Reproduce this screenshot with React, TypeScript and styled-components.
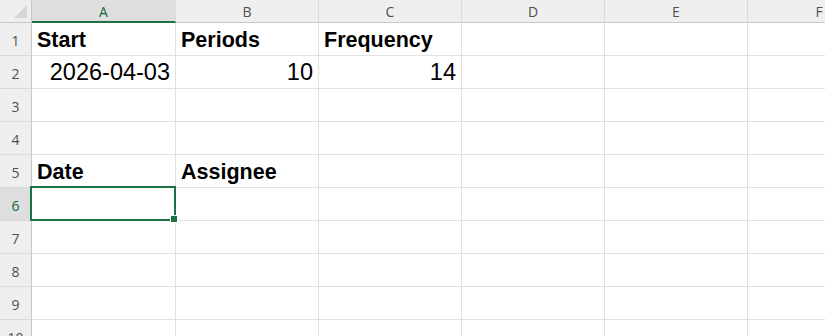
import React from "react";
import styled, { createGlobalStyle, css } from "styled-components";

const Global = createGlobalStyle`
  html, body { margin: 0; padding: 0; background: #ffffff; overflow: hidden; }
  body { font-family: "Liberation Sans", Arial, sans-serif; }
`;

const COLS = ["A", "B", "C", "D", "E", "F"];
const ROWS = 10;
const SELECTED_COL = "A";
const SELECTED_ROW = 6;

type CellData = { text: string; bold?: boolean; align?: "left" | "right" };
const DATA: Record<string, CellData> = {
  A1: { text: "Start", bold: true },
  B1: { text: "Periods", bold: true },
  C1: { text: "Frequency", bold: true },
  A2: { text: "2026-04-03", align: "right" },
  B2: { text: "10", align: "right" },
  C2: { text: "14", align: "right" },
  A5: { text: "Date", bold: true },
  B5: { text: "Assignee", bold: true },
};

const Sheet = styled.div`
  display: grid;
  grid-template-columns: 32px 144px 143px 143px 143px 143px 143px;
  grid-template-rows: 23px repeat(${ROWS}, 33px);
  width: 825px;
  height: 336px;
  overflow: hidden;
`;

const Corner = styled.div`
  position: relative;
  background: #efefef;
  border-right: 1px solid #c8c8c8;
  border-bottom: 1px solid #c8c8c8;
  box-sizing: border-box;
`;

const CornerTriangle = styled.div`
  position: absolute;
  right: 4px;
  bottom: 4px;
  width: 0;
  height: 0;
  border-left: 13px solid transparent;
  border-bottom: 13px solid #d6d6d6;
`;

const ColHeader = styled.div<{ $selected?: boolean }>`
  box-sizing: border-box;
  display: flex;
  align-items: center;
  justify-content: center;
  background: #efefef;
  border-right: 1px solid #dadada;
  border-bottom: 1px solid #c8c8c8;
  font-family: "Open Sans", "Noto Sans", sans-serif;
  font-size: 14px;
  color: #505050;
  padding-top: 1px;
  ${(p) =>
    p.$selected &&
    css`
      background: #dedede;
      color: #0f6b38;
      border-bottom: 2px solid #1e7145;
    `}
`;

const RowHeader = styled.div<{ $selected?: boolean }>`
  box-sizing: border-box;
  display: flex;
  align-items: flex-end;
  justify-content: center;
  padding-bottom: 5px;
  background: #efefef;
  border-right: 1px solid #c8c8c8;
  border-bottom: 1px solid #dadada;
  font-family: "Open Sans", "Noto Sans", sans-serif;
  font-size: 14px;
  color: #505050;
  ${(p) =>
    p.$selected &&
    css`
      background: #dedede;
      color: #0f6b38;
    `}
`;

const Cell = styled.div<{ $bold?: boolean; $align?: "left" | "right" }>`
  position: relative;
  box-sizing: border-box;
  display: flex;
  align-items: flex-end;
  justify-content: ${(p) => (p.$align === "right" ? "flex-end" : "flex-start")};
  padding: 0 5px 4px 5px;
  border-right: 1px solid #e1e1e1;
  border-bottom: 1px solid #e1e1e1;
  font-family: "Liberation Sans", Arial, sans-serif;
  font-size: ${(p) => (p.$bold ? "21.5px" : "23.5px")};
  font-weight: ${(p) => (p.$bold ? 700 : 400)};
  color: #000;
  white-space: nowrap;
  line-height: 1;
`;

const Selection = styled.div`
  position: absolute;
  left: -2px;
  top: -2px;
  right: -1px;
  bottom: -1px;
  border: 2px solid #1e7145;
  pointer-events: none;
  z-index: 2;
`;

const FillHandle = styled.div`
  position: absolute;
  right: -4px;
  bottom: -4px;
  width: 6px;
  height: 6px;
  background: #1e7145;
  border: 1px solid #ffffff;
`;

export default function App() {
  const rows = Array.from({ length: ROWS }, (_, i) => i + 1);
  return (
    <>
      <Global />
      <Sheet>
        <Corner>
          <CornerTriangle />
        </Corner>
        {COLS.map((c) => (
          <ColHeader key={c} $selected={c === SELECTED_COL}>
            {c}
          </ColHeader>
        ))}
        {rows.map((r) => (
          <React.Fragment key={r}>
            <RowHeader $selected={r === SELECTED_ROW}>{r}</RowHeader>
            {COLS.map((c) => {
              const d = DATA[`${c}${r}`];
              const sel = c === SELECTED_COL && r === SELECTED_ROW;
              return (
                <Cell key={c} $bold={d?.bold} $align={d?.align}>
                  {d?.text}
                  {sel && (
                    <Selection>
                      <FillHandle />
                    </Selection>
                  )}
                </Cell>
              );
            })}
          </React.Fragment>
        ))}
      </Sheet>
    </>
  );
}
